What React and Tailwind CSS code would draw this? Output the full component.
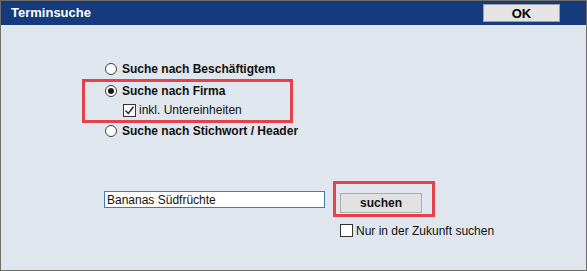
import React from 'react'

function Radio({ checked, label }) {
  return (
    <div className="flex items-center h-full">
      <span className="w-[12px] h-[12px] rounded-full border border-[#3c3c3c] bg-white flex items-center justify-center shrink-0">
        {checked && <span className="w-[6px] h-[6px] rounded-full bg-[#1a1a1a]" />}
      </span>
      <span className="ml-[5px] font-bold text-[12px] text-[#111]">{label}</span>
    </div>
  )
}

function Check({ checked, label }) {
  return (
    <div className="flex items-center h-full">
      <span className="w-[13px] h-[13px] border border-[#333] bg-white flex items-center justify-center shrink-0">
        {checked && (
          <svg width="11" height="11" viewBox="0 0 11 11">
            <path d="M1.5 5.5 L4.3 8.5 L9.5 1.8" fill="none" stroke="#222" strokeWidth="1.4" />
          </svg>
        )}
      </span>
      <span className="ml-[3px] text-[12px] text-[#111]">{label}</span>
    </div>
  )
}

export default function App() {
  return (
    <div className="w-[587px] h-[271px] border border-[#6e6e6e] bg-[#dfe6ee] flex flex-col font-['Liberation_Sans',Arial,sans-serif]">
      <div className="h-[24px] bg-[#153b7c] flex items-center justify-between pl-[10px] pr-[26px] shrink-0">
        <span className="text-white font-bold text-[13px]">Terminsuche</span>
        <button className="w-[77px] h-[18px] bg-[#e4e4e4] border border-[#a0a0a0] text-[13px] font-bold text-black leading-none">
          OK
        </button>
      </div>

      <div className="flex flex-col pl-[81px] pt-[34px]">
        <div className="h-[20px] pl-[23px]">
          <Radio label="Suche nach Beschäftigtem" />
        </div>
        <div className="w-[211px] h-[44px] border-[3px] border-[#e5414a] flex flex-col">
          <div className="h-[18px] pl-[20px]">
            <Radio checked label="Suche nach Firma" />
          </div>
          <div className="h-[20px] pl-[38px]">
            <Check checked label="inkl. Untereinheiten" />
          </div>
        </div>
        <div className="h-[15px] pl-[23px]">
          <Radio label="Suche nach Stichwort / Header" />
        </div>
      </div>

      <div className="flex flex-col pl-[103px] pt-[43px]">
        <div className="flex items-start">
          <div className="mt-[10px] w-[221px] h-[17px] border border-[#3c7fb1] bg-white flex items-center px-[2px] text-[12px] text-[#111]">
            Bananas Südfrüchte
          </div>
          <div className="ml-[8px] w-[102px] h-[36px] border-[3px] border-[#e5414a] pl-[4px] pt-[6px]">
            <button className="w-[82px] h-[20px] bg-[#e1e1e1] border border-[#adadad] text-[12px] font-bold text-[#111] leading-none">
              suchen
            </button>
          </div>
        </div>
        <div className="h-[13px] mt-[7px] pl-[236px]">
          <Check label="Nur in der Zukunft suchen" />
        </div>
      </div>
    </div>
  )
}
